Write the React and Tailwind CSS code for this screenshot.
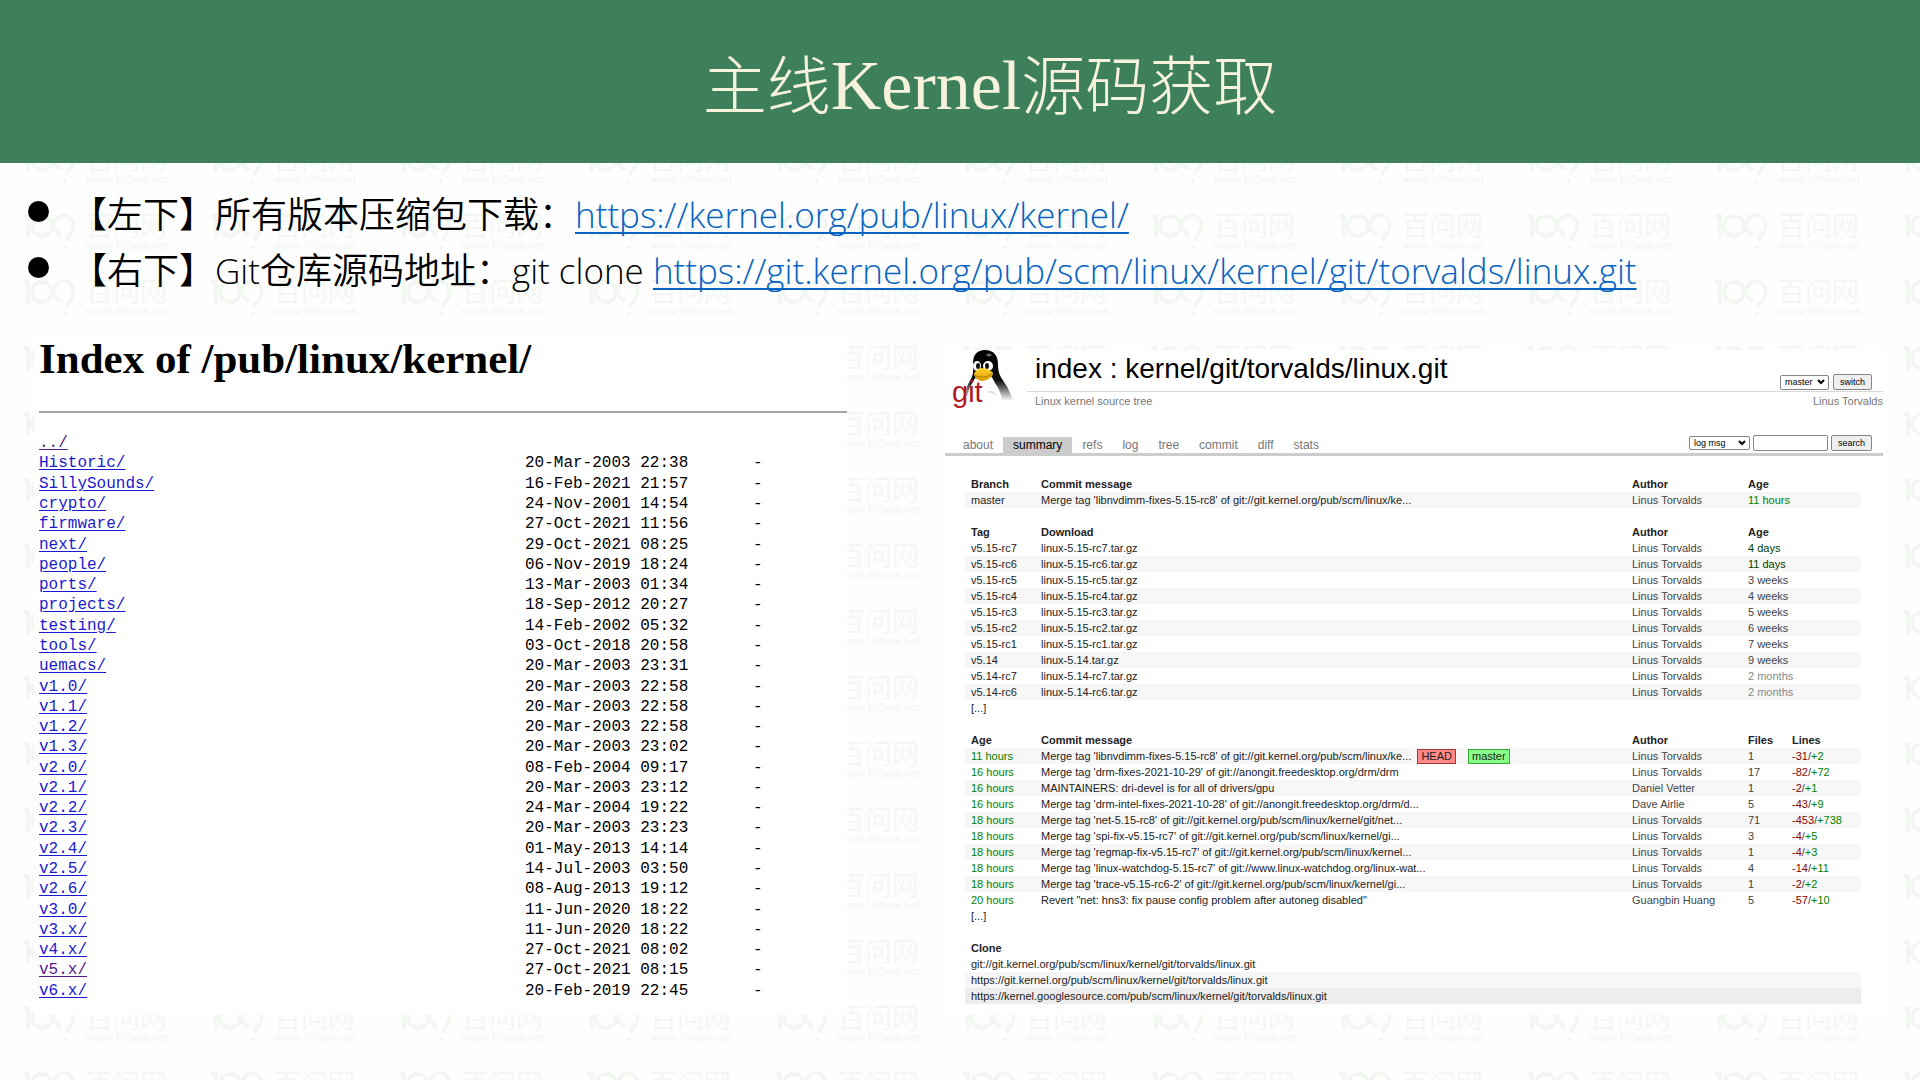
const directories = [
  ["Historic/", "20-Mar-2003 22:38"],
  ["SillySounds/", "16-Feb-2021 21:57"],
  ["crypto/", "24-Nov-2001 14:54"],
  ["firmware/", "27-Oct-2021 11:56"],
  ["next/", "29-Oct-2021 08:25"],
  ["people/", "06-Nov-2019 18:24"],
  ["ports/", "13-Mar-2003 01:34"],
  ["projects/", "18-Sep-2012 20:27"],
  ["testing/", "14-Feb-2002 05:32"],
  ["tools/", "03-Oct-2018 20:58"],
  ["uemacs/", "20-Mar-2003 23:31"],
  ["v1.0/", "20-Mar-2003 22:58"],
  ["v1.1/", "20-Mar-2003 22:58"],
  ["v1.2/", "20-Mar-2003 22:58"],
  ["v1.3/", "20-Mar-2003 23:02"],
  ["v2.0/", "08-Feb-2004 09:17"],
  ["v2.1/", "20-Mar-2003 23:12"],
  ["v2.2/", "24-Mar-2004 19:22"],
  ["v2.3/", "20-Mar-2003 23:23"],
  ["v2.4/", "01-May-2013 14:14"],
  ["v2.5/", "14-Jul-2003 03:50"],
  ["v2.6/", "08-Aug-2013 19:12"],
  ["v3.0/", "11-Jun-2020 18:22"],
  ["v3.x/", "11-Jun-2020 18:22"],
  ["v4.x/", "27-Oct-2021 08:02"],
  ["v5.x/", "27-Oct-2021 08:15"],
  ["v6.x/", "20-Feb-2019 22:45"],
];

const tabs = ["about", "summary", "refs", "log", "tree", "commit", "diff", "stats"];

const tags = [
  ["v5.15-rc7", "4 days"],
  ["v5.15-rc6", "11 days"],
  ["v5.15-rc5", "3 weeks"],
  ["v5.15-rc4", "4 weeks"],
  ["v5.15-rc3", "5 weeks"],
  ["v5.15-rc2", "6 weeks"],
  ["v5.15-rc1", "7 weeks"],
  ["v5.14", "9 weeks"],
  ["v5.14-rc7", "2 months"],
  ["v5.14-rc6", "2 months"],
];

const commits = [
  ["11 hours", "Merge tag 'libnvdimm-fixes-5.15-rc8' of git://git.kernel.org/pub/scm/linux/ke...", "Linus Torvalds", "1", "-31", "+2"],
  ["16 hours", "Merge tag 'drm-fixes-2021-10-29' of git://anongit.freedesktop.org/drm/drm", "Linus Torvalds", "17", "-82", "+72"],
  ["16 hours", "MAINTAINERS: dri-devel is for all of drivers/gpu", "Daniel Vetter", "1", "-2", "+1"],
  ["16 hours", "Merge tag 'drm-intel-fixes-2021-10-28' of git://anongit.freedesktop.org/drm/d...", "Dave Airlie", "5", "-43", "+9"],
  ["18 hours", "Merge tag 'net-5.15-rc8' of git://git.kernel.org/pub/scm/linux/kernel/git/net...", "Linus Torvalds", "71", "-453", "+738"],
  ["18 hours", "Merge tag 'spi-fix-v5.15-rc7' of git://git.kernel.org/pub/scm/linux/kernel/gi...", "Linus Torvalds", "3", "-4", "+5"],
  ["18 hours", "Merge tag 'regmap-fix-v5.15-rc7' of git://git.kernel.org/pub/scm/linux/kernel...", "Linus Torvalds", "1", "-4", "+3"],
  ["18 hours", "Merge tag 'linux-watchdog-5.15-rc7' of git://www.linux-watchdog.org/linux-wat...", "Linus Torvalds", "4", "-14", "+11"],
  ["18 hours", "Merge tag 'trace-v5.15-rc6-2' of git://git.kernel.org/pub/scm/linux/kernel/gi...", "Linus Torvalds", "1", "-2", "+2"],
  ["20 hours", 'Revert "net: hns3: fix pause config problem after autoneg disabled"', "Guangbin Huang", "5", "-57", "+10"],
];

const cloneUrls = [
  ["git://git.kernel.org/pub/scm/linux/kernel/git/torvalds/linux.git", ""],
  ["https://git.kernel.org/pub/scm/linux/kernel/git/torvalds/linux.git", "bg-[#f7f7f7]"],
  ["https://kernel.googlesource.com/pub/scm/linux/kernel/git/torvalds/linux.git", "bg-[#ededed]"],
];

function Watermark() {
  return (
    <svg className="absolute inset-0 h-full w-full" aria-hidden="true">
      <defs>
        <pattern id="mark" x="22" y="213" width="188" height="66" patternUnits="userSpaceOnUse">
          <g fill="none" stroke="#f2f8f1" strokeWidth="4">
            <path d="M1 3h5v22" />
            <circle cx="20" cy="13" r="10" />
            <path d="M39 22a10 10 0 1 1 12-6c-1 4-4 6-7 12" />
          </g>
          <circle cx="43" cy="34" r="2" fill="#f2f8f1" />
          <text x="64" y="23" fontSize="27" fill="#f2f8f1" className="font-['Noto_Sans_CJK_SC',sans-serif]">百问网</text>
          <text x="64" y="36" fontSize="10" fontWeight="700" fill="#f2f8f1" className="font-['Open_Sans',sans-serif]">www.100ask.net</text>
        </pattern>
      </defs>
      <rect width="100%" height="100%" fill="url(#mark)" />
    </svg>
  );
}

function TuxLogo() {
  return (
    <svg className="h-[60px] w-[62px] shrink-0" viewBox="0 1 62 60" role="img" aria-label="git logo">
      <defs>
        <linearGradient id="coat" x1="0" y1="0" x2="0" y2="1">
          <stop offset="0" stopColor="#000" />
          <stop offset="0.6" stopColor="#111" />
          <stop offset="1" stopColor="#fff" />
        </linearGradient>
        <linearGradient id="beak" x1="0" y1="0" x2="0" y2="1">
          <stop offset="0" stopColor="#ffd42a" />
          <stop offset="1" stopColor="#e0a000" />
        </linearGradient>
        <radialGradient id="shine" cx="0.5" cy="0.5" r="0.5">
          <stop offset="0" stopColor="#999" />
          <stop offset="1" stopColor="#000" />
        </radialGradient>
      </defs>
      <path fill="url(#coat)" d="M33 1C25 1 21 6 21 14c0 6 1 10-2 16-3 5-6 11-6 17 6 3 10 5 16 5l32-1c-3-7-5-13-9-18-4-6-6-9-6-18C46 6 41 1 33 1Z" />
      <path fill="#fff" d="M23 29c-2 5-6 9-7 16l-4 9h38c0-7-2-12-5-17-3-4-4-9-7-10-5 3-10 4-15 2Z" />
      <path fill="#ddd" d="M35 43c4-2 7-1 10 4-4-3-7-3-10-4Z" />
      <ellipse cx="37" cy="6" rx="4" ry="2" fill="url(#shine)" />
      <ellipse cx="25" cy="17" rx="4" ry="5" fill="#fff" />
      <ellipse cx="36" cy="17" rx="5" ry="5" fill="#fff" />
      <ellipse cx="26" cy="17" rx="2" ry="3" fill="#111" />
      <ellipse cx="35" cy="17" rx="2" ry="3" fill="#111" />
      <path fill="url(#beak)" d="M22 25c1-3 5-6 8-6 4 0 10 3 11 5 0 4-6 8-11 8-4 0-8-4-8-7Z" />
      <path fill="none" stroke="#a87400" d="M23 26c3 3 11 3 17-1" />
      <text x="0" y="53" fontSize="29" fill="#b01822" className="font-['Liberation_Sans',sans-serif]">git</text>
    </svg>
  );
}

function Select({ label, value, size }) {
  return (
    <div className="relative flex">
      <select aria-label={label} defaultValue={value} className={`${size} appearance-none rounded-xs border border-[#858585] bg-white pl-1 text-[9px] leading-none text-black`}>
        <option>{value}</option>
      </select>
      <svg className="pointer-events-none absolute inset-y-0 right-1 my-auto h-2 w-2" viewBox="0 0 8 8" aria-hidden="true">
        <path d="M1 2l3 3 3-3" fill="none" stroke="#000" strokeWidth="2" />
      </svg>
    </div>
  );
}

const buttonStyle = "h-4 rounded-xs border border-[#858585] bg-[#efefef] px-[6px] text-[9px] leading-none text-black";

function ageColor(age) {
  if (age.endsWith("hours")) return "text-[#008000]";
  if (age.endsWith("days")) return "text-[#004000]";
  if (age.endsWith("months")) return "text-[#888888]";
  return "text-[#444444]";
}

function DirectoryIndex() {
  return (
    <section className="bg-white pt-[2px] pl-[5px]">
      <h1 className="font-['Liberation_Serif',serif] text-[43px] leading-[44px] font-bold text-black">Index of /pub/linux/kernel/</h1>
      <hr className="mt-[30px] border-t-2 border-[#a5a5a5]" />
      <table className="mt-5 h-[568px] w-full font-['Liberation_Mono',monospace] text-base leading-5 text-black">
        <tbody>
          <tr>
            <td className="w-[486px] p-0">
              <a href="#parent" className="text-[#551a8b] underline underline-offset-2">../</a>
            </td>
            <td />
            <td />
          </tr>
          {directories.map(([name, date]) => (
            <tr key={name}>
              <td className="w-[486px] p-0">
                <a href={`#${name}`} className={name === "v5.x/" ? "text-[#551a8b] underline underline-offset-2" : "text-[#1a1ad0] underline underline-offset-2"}>{name}</a>
              </td>
              <td className="w-[228px] p-0">{date}</td>
              <td className="p-0">-</td>
            </tr>
          ))}
        </tbody>
      </table>
    </section>
  );
}

function HeadRow({ cells }) {
  return (
    <tr className="font-bold text-[#222222]">
      {cells.map((cell, i) => (
        <th key={cell} colSpan={cells.length === 4 && i === 3 ? 2 : 1} className="h-4 px-[6px] py-0 text-left">{cell}</th>
      ))}
    </tr>
  );
}

function Spacer({ more }) {
  return (
    <>
      {more && (
        <tr>
          <td colSpan="5" className="h-4 px-[6px] py-0"><a href="#more">[...]</a></td>
        </tr>
      )}
      <tr><td colSpan="5" className="h-4 p-0" /></tr>
    </>
  );
}

function RepoSummary() {
  return (
    <section className="mt-[15px] bg-white font-['Liberation_Sans',sans-serif] text-[11px] leading-4 text-[#222222]">
      <header className="flex pl-[7px]">
        <TuxLogo />
        <div className="ml-[13px] flex-1">
          <div className="flex h-[42px] items-end justify-between border-b border-[#d8d8d8] pl-2">
            <h2 className="self-start text-[28px] leading-[37px] text-black"><a href="#index">index</a> : <a href="#repo">kernel/git/torvalds/linux.git</a></h2>
            <form className="mr-[11px] mb-px flex items-center gap-1">
              <Select label="Branch" value="master" size="h-[15px] w-[49px]" />
              <button type="button" className={buttonStyle}>switch</button>
            </form>
          </div>
          <div className="flex justify-between pt-px pl-2 text-[#777777]">
            <p>Linux kernel source tree</p>
            <p>Linus Torvalds</p>
          </div>
        </div>
      </header>
      <div className="mt-[25px] flex items-end justify-between border-b-3 border-[#cccccc]">
        <nav className="flex pl-2 text-xs text-[#777777]">
          {tabs.map((tab) => (
            <a key={tab} href={`#${tab}`} className={tab === "summary" ? "bg-[#cccccc] px-[10px] text-black" : "px-[10px]"}>{tab}</a>
          ))}
        </nav>
        <form className="mr-[11px] mb-[2px] flex items-center gap-[3px]">
          <Select label="Search in" value="log msg" size="h-[14px] w-[61px]" />
          <input aria-label="Search text" className="h-4 w-[75px] rounded-xs border border-[#858585] bg-white px-1 text-[9px]" />
          <button type="button" className={buttonStyle}>search</button>
        </form>
      </div>
      <div className="pt-5 pr-[22px] pb-[11px] pl-5">
        <table className="w-full table-fixed whitespace-nowrap">
          <colgroup>
            <col className="w-[70px]" />
            <col />
            <col className="w-[116px]" />
            <col className="w-[44px]" />
            <col className="w-[75px]" />
          </colgroup>
          <tbody>
            <HeadRow cells={["Branch", "Commit message", "Author", "Age"]} />
            <tr className="bg-[#f7f7f7]">
              <td className="h-4 px-[6px] py-0"><a href="#master">master</a></td>
              <td className="px-[6px] py-0"><a href="#merge">{commits[0][1]}</a></td>
              <td className="px-[6px] py-0 text-[#444444]">Linus Torvalds</td>
              <td colSpan="2" className="px-[6px] py-0 text-[#008000]">11 hours</td>
            </tr>
            <Spacer />
            <HeadRow cells={["Tag", "Download", "Author", "Age"]} />
            {tags.map(([tag, age], i) => (
              <tr key={tag} className={i % 2 ? "bg-[#f7f7f7]" : ""}>
                <td className="h-4 px-[6px] py-0"><a href={`#${tag}`}>{tag}</a></td>
                <td className="px-[6px] py-0"><a href={`#dl-${tag}`}>{`linux-${tag.slice(1)}.tar.gz`}</a></td>
                <td className="px-[6px] py-0 text-[#444444]">Linus Torvalds</td>
                <td colSpan="2" className={`px-[6px] py-0 ${ageColor(age)}`}>{age}</td>
              </tr>
            ))}
            <Spacer more />
            <HeadRow cells={["Age", "Commit message", "Author", "Files", "Lines"]} />
            {commits.map(([age, message, author, files, removed, added], i) => (
              <tr key={message} className={i % 2 ? "" : "bg-[#f7f7f7]"}>
                <td className="h-4 px-[6px] py-0 text-[#008000]">{age}</td>
                <td className="px-[6px] py-0">
                  <div className="flex h-4 items-center">
                    <a href={`#commit-${i}`}>{message}</a>
                    {i === 0 && (
                      <>
                        <a href="#head" className="ml-[6px] border border-[#aa3333] bg-[#ff8888] px-[3px] leading-[13px]">HEAD</a>
                        <a href="#branch" className="ml-3 border border-[#33aa33] bg-[#88ff88] px-[3px] leading-[13px]">master</a>
                      </>
                    )}
                  </div>
                </td>
                <td className="px-[6px] py-0 text-[#444444]">{author}</td>
                <td className="px-[6px] py-0 text-[#444444]">{files}</td>
                <td className="px-[6px] py-0 text-[#444444]"><span className="text-[#880000]">{removed}</span>/<span className="text-[#008000]">{added}</span></td>
              </tr>
            ))}
            <Spacer more />
            <tr className="font-bold"><th colSpan="5" className="h-4 px-[6px] py-0 text-left">Clone</th></tr>
            {cloneUrls.map(([url, stripe]) => (
              <tr key={url} className={stripe}>
                <td colSpan="5" className="h-4 px-[6px] py-0"><a href={url}>{url}</a></td>
              </tr>
            ))}
          </tbody>
        </table>
      </div>
    </section>
  );
}

function Latin({ children }) {
  return <span className="font-['Open_Sans',sans-serif] text-[35px] font-light">{children}</span>;
}

function SlideLink({ url }) {
  return (
    <a href={url} className="font-['Open_Sans',sans-serif] text-[35px] font-light text-[#0563c1] underline decoration-2 underline-offset-4 [text-decoration-skip-ink:none]">{url}</a>
  );
}

function Bullet({ children }) {
  return (
    <li className="flex h-14 items-center pl-7">
      <span className="mr-[22px] h-[21px] w-[21px] rounded-full bg-black" />
      <p className="pt-1">{children}</p>
    </li>
  );
}

export default function App() {
  return (
    <div className="relative min-h-screen overflow-hidden bg-[#fefefe]">
      <Watermark />
      <div className="relative">
        <header className="flex h-[163px] justify-center bg-[#3e805b] pt-[37px] pl-[60px] text-[#f6f2dc]">
          <h1 className="font-['Noto_Sans_CJK_SC',sans-serif] text-[64px] leading-[88px] font-light">
            主线<span className="font-['Liberation_Serif',serif] text-[70px]">Kernel</span>源码获取
          </h1>
        </header>
        <ul className="pt-5 font-['Noto_Sans_CJK_SC',sans-serif] text-4xl leading-[52px] font-[350] whitespace-nowrap text-black">
          <Bullet>
            【左下】所有版本压缩包下载：<SlideLink url="https://kernel.org/pub/linux/kernel/" />
          </Bullet>
          <Bullet>
            【右下】<Latin>Git</Latin>仓库源码地址：<Latin>git clone </Latin><SlideLink url="https://git.kernel.org/pub/scm/linux/kernel/git/torvalds/linux.git" />
          </Bullet>
        </ul>
        <main className="mt-10 grid grid-cols-[813fr_938fr] gap-[98px] pr-[37px] pl-[34px]">
          <DirectoryIndex />
          <RepoSummary />
        </main>
      </div>
    </div>
  );
}
